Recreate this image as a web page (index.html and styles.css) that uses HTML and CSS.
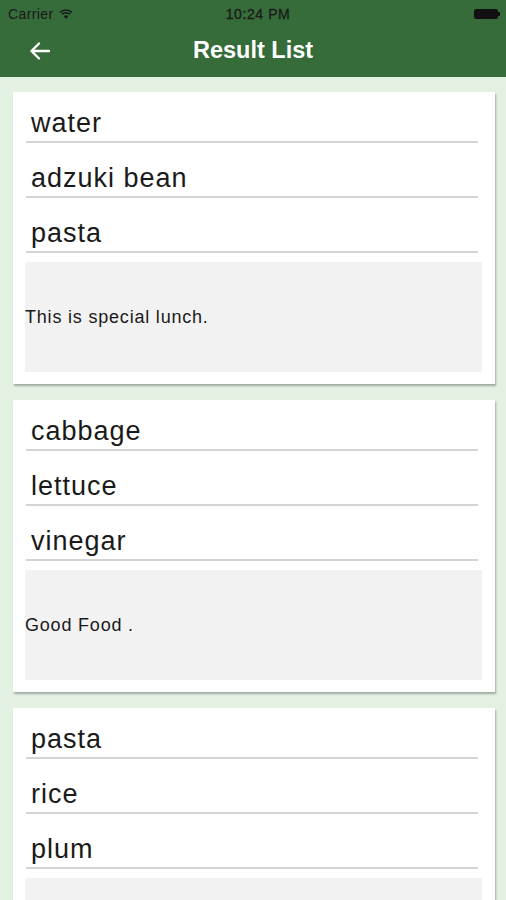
FILE: index.html
```html
<!DOCTYPE html>
<html lang="en">
<head>
    <meta charset="UTF-8">
    <meta name="viewport" content="width=device-width, initial-scale=1.0">
    <title>Result List</title>
    <link rel="stylesheet" href="styles.css">
</head>
<body>
    <header class="top-bar">
        <div class="status-bar">
            <div class="carrier">
                Carrier
                <svg class="wifi" width="14" height="10" viewBox="0 0 14 10">
                    <path d="M7 10 L4.6 7.2 A3.6 3.6 0 0 1 9.4 7.2 Z" fill="#1a1a1a"/>
                    <path d="M2.9 5.4 A6 6 0 0 1 11.1 5.4" stroke="#1a1a1a" stroke-width="1.6" fill="none"/>
                    <path d="M1 3.4 A8.6 8.6 0 0 1 13 3.4" stroke="#1a1a1a" stroke-width="1.6" fill="none"/>
                </svg>
            </div>
            <div class="time">10:24 PM</div>
            <div class="battery">
                <span class="battery-body"></span><span class="battery-nub"></span>
            </div>
        </div>
        <nav class="nav-bar">
            <svg class="back" width="22" height="20" viewBox="0 0 22 20">
                <path d="M20 10 H3 M10 2.5 L2.5 10 L10 17.5" stroke="#fff" stroke-width="2.4" fill="none" stroke-linecap="round" stroke-linejoin="round"/>
            </svg>
            <h1 class="nav-title">Result List</h1>
        </nav>
    </header>

    <main class="result-list">
        <section class="result-card">
            <div class="food-row">water</div>
            <div class="food-row">adzuki bean</div>
            <div class="food-row">pasta</div>
            <div class="memo">This is special lunch.</div>
        </section>
        <section class="result-card">
            <div class="food-row">cabbage</div>
            <div class="food-row">lettuce</div>
            <div class="food-row">vinegar</div>
            <div class="memo">Good Food .</div>
        </section>
        <section class="result-card">
            <div class="food-row">pasta</div>
            <div class="food-row">rice</div>
            <div class="food-row">plum</div>
            <div class="memo"></div>
        </section>
    </main>
</body>
</html>
```

FILE: styles.css
```css
body {
    margin: 0;
    background-color: #e3f1e3;
    font-family: "Liberation Sans", Arial, sans-serif;
    overflow: hidden;
}

.top-bar {
    background-color: #366b3a;
    height: 77px;
}

.status-bar {
    height: 27px;
    display: flex;
    align-items: center;
    justify-content: space-between;
    padding: 0 6px 0 8px;
    font-size: 14px;
    color: #1a1a1a;
}

.carrier {
    display: flex;
    align-items: center;
    gap: 5px;
    width: 90px;
    letter-spacing: 0.4px;
}

.time {
    font-size: 14px;
    letter-spacing: 0.6px;
    -webkit-text-stroke: 0.3px #1a1a1a;
    margin-left: 8px;
}

.battery {
    width: 90px;
    display: flex;
    justify-content: flex-end;
    align-items: center;
}

.battery-body {
    width: 24px;
    height: 10px;
    background-color: #111;
    border-radius: 2px;
}

.battery-nub {
    width: 2px;
    height: 4px;
    background-color: #111;
}

.nav-bar {
    height: 50px;
    display: flex;
    align-items: center;
    justify-content: center;
    position: relative;
}

.back {
    position: absolute;
    left: 29px;
    top: 14px;
}

.nav-title {
    margin: 0;
    color: #fff;
    font-size: 23.5px;
    font-weight: bold;
    margin-top: -3px;
}

.result-list {
    padding: 15px 11px 0 13px;
    display: flex;
    flex-direction: column;
    gap: 16px;
}

.result-card {
    background-color: #fff;
    height: 292px;
    box-shadow: 1px 2px 2px rgba(0, 0, 0, 0.3);
    padding: 0 13px 0 12px;
    box-sizing: border-box;
}

.food-row {
    height: 51px;
    margin: 4px 4px 0 1px;
    border-bottom: 2px solid #d4d4d4;
    box-sizing: border-box;
    display: flex;
    align-items: flex-end;
    padding: 0 0 2px 5px;
    font-size: 27px;
    line-height: 32px;
    letter-spacing: 1px;
    color: #1a1a1a;
}

.food-row:first-child {
    margin-top: 0;
}

.memo {
    margin-top: 9px;
    height: 110px;
    background-color: #f2f2f2;
    display: flex;
    align-items: center;
    font-size: 18px;
    letter-spacing: 0.8px;
    color: #1a1a1a;
    padding-top: 1px;
    box-sizing: border-box;
}
```
